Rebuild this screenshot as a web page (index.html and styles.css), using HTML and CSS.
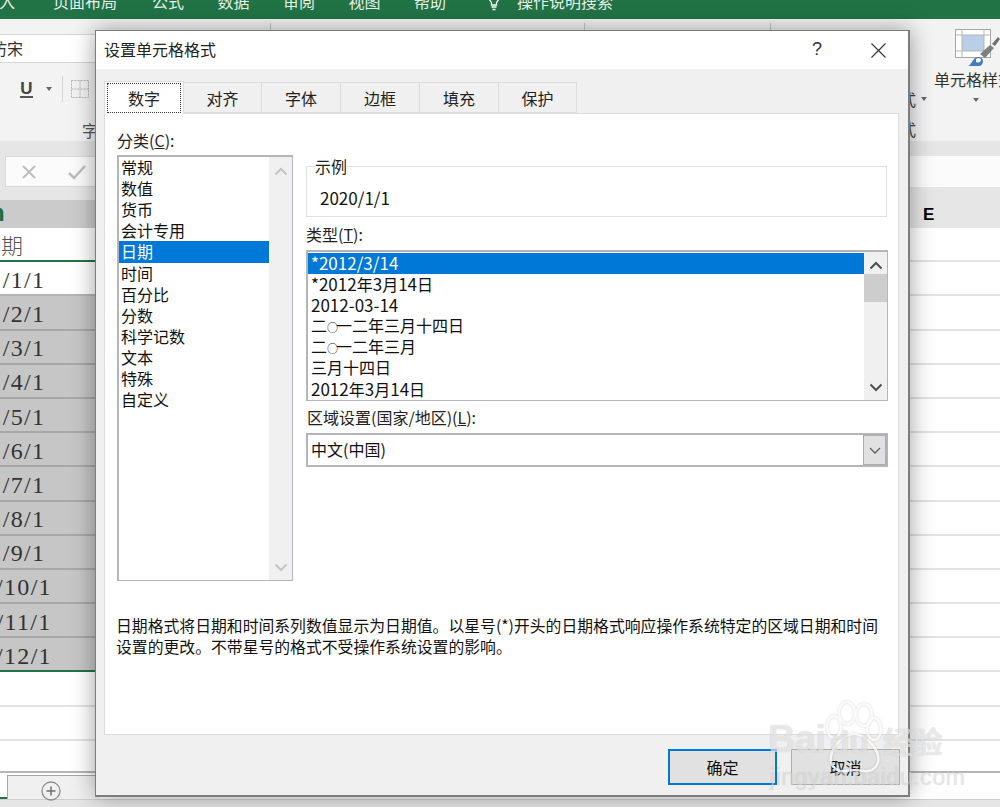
FILE: index.html
```html
<!DOCTYPE html>
<html lang="zh-CN">
<head>
<meta charset="utf-8">
<title>设置单元格格式</title>
<link rel="stylesheet" href="styles.css">
</head>
<body>
<div class="app">
  <div class="menubar">
    <span class="m m1">入</span><span class="m m2">页面布局</span><span class="m m2b">公式</span><span class="m m3">数据</span><span class="m m3">审阅</span><span class="m m3">视图</span><span class="m m3">帮助</span>
    <svg class="lamp" width="16" height="14" viewBox="0 0 16 14"><path d="M3 0c0 3 1.500 4 2.500 5.500V8h5V5.500C11.500 4 13 3 13 0M5.500 10h5M6.500 12.500h3" fill="none" stroke="#fff" stroke-width="1.300"/></svg>
    <span class="m m4">操作说明搜索</span>
  </div>

  <div class="ribbon">
    <div class="rb-left">
      <div class="fontbox"><span class="fontname">仿宋</span></div>
      <div class="tools">
        <span class="under">U</span>
        <span class="caret caret-u"></span>
        <span class="tooldiv"></span>
        <svg class="bordericon" width="18" height="18" viewBox="0 0 18 18"><path d="M.5.500h17v17H.5zM9 .500v17M.5 9h17" fill="none" stroke="#b5b5b5" stroke-dasharray="2 1"/></svg>
      </div>
      <div class="grouplabel">字</div>
    </div>
    <div class="rb-mid">
      <span class="rbdiv rbdiv1"></span><span class="rbdiv rbdiv2"></span><span class="rbdiv rbdiv3"></span>
    </div>
    <div class="rb-right">
      <div class="rb-col1">
        <div class="frag-row"><span class="frag">式</span><span class="caret"></span></div>
        <div class="frag frag2">式</div>
      </div>
      <div class="rb-col2">
        <svg class="styleicon" width="45" height="40" viewBox="0 0 45 40">
          <rect x=".5" y=".5" width="35" height="28" fill="#fff" stroke="#a6a6a6"/>
          <rect x="7" y="6" width="22" height="16" fill="#b9cfe8"/>
          <path d="M7 .5v28M29 .5v28M.5 6h35M.5 22h35" stroke="#b5b5b5" fill="none"/>
          <path d="M25 25l10-9 4 3-9 10z" fill="#7f7f7f"/>
          <path d="M37 15l6-7 2 2-5 7z" fill="#6f6f6f"/>
          <path d="M13 37c3-1 4-5 7-8 3-2 8-1 8 3 0 3-2 5-4 5z" fill="#3f7fc1"/>
          <path d="M21 30c2-2 5-1 5 1s-3 3-5 2z" fill="#fff"/>
        </svg>
        <div class="stylelabel">单元格样式</div>
        <span class="caret caret-s"></span>
      </div>
    </div>
  </div>

  <div class="formulabar">
    <div class="fxbox">
      <svg class="fxicon" width="16" height="16" viewBox="0 0 16 16"><path d="M2 2l12 12M14 2L2 14" stroke="#bdbdbd" stroke-width="2" fill="none"/></svg>
      <svg class="fxicon fxicon2" width="18" height="16" viewBox="0 0 18 16"><path d="M1 9l5 5L17 2" stroke="#bdbdbd" stroke-width="2.500" fill="none"/></svg>
    </div>
    <div class="fxright"></div>
  </div>

  <div class="headstrip"></div>
  <div class="colhead">
    <div class="colsel"><span class="colsel-t">n</span></div>
    <div class="colrest"><span class="coltext">E</span></div>
  </div>

  <div class="sheet">
    <div class="row"><div class="cell active-head"><span class="headtext">期</span></div></div>
    <div class="row"><div class="cell active"><span class="celltext">/1/1</span></div></div>
    <div class="row"><div class="cell sel"><span class="celltext">/2/1</span></div></div>
    <div class="row"><div class="cell sel"><span class="celltext">/3/1</span></div></div>
    <div class="row"><div class="cell sel"><span class="celltext">/4/1</span></div></div>
    <div class="row"><div class="cell sel"><span class="celltext">/5/1</span></div></div>
    <div class="row"><div class="cell sel"><span class="celltext">/6/1</span></div></div>
    <div class="row"><div class="cell sel"><span class="celltext">/7/1</span></div></div>
    <div class="row"><div class="cell sel"><span class="celltext">/8/1</span></div></div>
    <div class="row"><div class="cell sel"><span class="celltext">/9/1</span></div></div>
    <div class="row"><div class="cell sel"><span class="celltext">/10/1</span></div></div>
    <div class="row"><div class="cell sel"><span class="celltext">/11/1</span></div></div>
    <div class="row"><div class="cell sel last"><span class="celltext">/12/1</span></div></div>
    <div class="row"><div class="cell"></div></div>
    <div class="row"><div class="cell"></div></div>
    <div class="row row-short"><div class="cell"></div></div>
  </div>

  <div class="tabbar">
    <div class="sheetedge"></div>
    <div class="sheettabs">
      <svg class="plus" width="20" height="20" viewBox="0 0 20 20"><circle cx="10" cy="10" r="9" fill="none" stroke="#8c8c8c" stroke-width="1.300"/><path d="M10 5.500v9M5.500 10h9" stroke="#6f6f6f" stroke-width="1.500"/></svg>
    </div>
    <div class="tabright"></div>
  </div>
  <div class="statusbar"></div>
</div>

<div class="dialog">
  <div class="titlebar">
    <span class="title">设置单元格格式</span>
    <span class="help">?</span>
    <svg class="close" width="15" height="15" viewBox="0 0 15 15"><path d="M.5.500l14 14M14.500.500l-14 14" stroke="#333" stroke-width="1.100" fill="none"/></svg>
  </div>
  <div class="dbody">
    <div class="tabs">
      <div class="tab tab-on"><span class="focus">数字</span></div>
      <div class="tab tab2">对齐</div>
      <div class="tab tab3">字体</div>
      <div class="tab tab3">边框</div>
      <div class="tab tab3">填充</div>
      <div class="tab tab3">保护</div>
    </div>
    <div class="panel">
      <div class="cols">
        <div class="col1">
          <div class="label">分类(<u>C</u>):</div>
          <div class="listbox catlist">
            <div class="items">
              <div class="item">常规</div>
              <div class="item">数值</div>
              <div class="item">货币</div>
              <div class="item">会计专用</div>
              <div class="item item-on">日期</div>
              <div class="item">时间</div>
              <div class="item">百分比</div>
              <div class="item">分数</div>
              <div class="item">科学记数</div>
              <div class="item">文本</div>
              <div class="item">特殊</div>
              <div class="item">自定义</div>
            </div>
            <div class="scroll">
              <svg class="arrow" width="14" height="9" viewBox="0 0 14 9"><path d="M1.500 7.500L7 2l5.500 5.500" fill="none" stroke="#c4c4c4" stroke-width="2"/></svg>
              <svg class="arrow" width="14" height="9" viewBox="0 0 14 9"><path d="M1.500 1.500L7 7l5.500-5.500" fill="none" stroke="#c4c4c4" stroke-width="2"/></svg>
            </div>
          </div>
        </div>
        <div class="col2">
          <fieldset class="sample">
            <legend class="legend">示例</legend>
            <div class="samplevalue num">2020/1/1</div>
          </fieldset>
          <div class="label label-type">类型(<u>T</u>):</div>
          <div class="listbox typelist">
            <div class="items">
              <div class="item item-on"><span class="num">*2012/3/14</span></div>
              <div class="item"><span class="num">*2012</span>年<span class="num">3</span>月<span class="num">14</span>日</div>
              <div class="item"><span class="num">2012-03-14</span></div>
              <div class="item">二<span class="zero">○</span>一二年三月十四日</div>
              <div class="item">二<span class="zero">○</span>一二年三月</div>
              <div class="item">三月十四日</div>
              <div class="item"><span class="num">2012</span>年<span class="num">3</span>月<span class="num">14</span>日</div>
            </div>
            <div class="scroll">
              <svg class="arrow" width="14" height="9" viewBox="0 0 14 9"><path d="M1.500 7.500L7 2l5.500 5.500" fill="none" stroke="#505050" stroke-width="2"/></svg>
              <div class="thumb"></div>
              <svg class="arrow" width="14" height="9" viewBox="0 0 14 9"><path d="M1.500 1.500L7 7l5.500-5.500" fill="none" stroke="#505050" stroke-width="2"/></svg>
            </div>
          </div>
          <div class="label label-region">区域设置(国家/地区)(<u>L</u>):</div>
          <div class="select">
            <span class="selecttext">中文(中国)</span>
            <span class="selectbtn"><svg width="12" height="7" viewBox="0 0 12 7"><path d="M1 1l5 5 5-5" fill="none" stroke="#606060" stroke-width="1.300"/></svg></span>
          </div>
        </div>
      </div>
      <p class="desc">日期格式将日期和时间系列数值显示为日期值。以星号(*)开头的日期格式响应操作系统特定的区域日期和时间<br>设置的更改。不带星号的格式不受操作系统设置的影响。</p>
    </div>
    <div class="footer">
      <button class="btn btn-default">确定</button>
      <button class="btn">取消</button>
    </div>
  </div>
</div>

<div class="watermark">
  <svg class="paw" width="90" height="78" viewBox="0 0 90 78">
    <g fill="none" stroke="#fff" stroke-opacity=".8" stroke-width="2.500">
      <ellipse cx="18" cy="27" rx="7" ry="11"/>
      <ellipse cx="31" cy="13" rx="8" ry="11"/>
      <ellipse cx="48" cy="15" rx="8" ry="11"/>
      <ellipse cx="58" cy="29" rx="7" ry="11"/>
      <path d="M38 34c10 0 22 12 24 22 2 10-6 16-14 15-6-1-14-1-20 0-8 1-15-6-13-15 2-10 13-22 23-22z"/>
    </g>
  </svg>
  <span class="wm-bai">Bai</span>
  <span class="wm-du">du</span>
  <span class="wm-cn">经验</span>
  <span class="wm-url">jingyan.baidu.com</span>
</div>
</body>
</html>
```

FILE: styles.css
```css
* { box-sizing: border-box; }
html, body { margin: 0; padding: 0; }
body {
  width: 1000px;
  height: 807px;
  overflow: hidden;
  position: relative;
  background: #fff;
  font-family: "Noto Sans CJK SC", "Noto Sans", sans-serif;
  font-size: 16px;
  color: #111;
}
.app { width: 1000px; height: 807px; overflow: hidden; }

/* menu */
.menubar {
  height: 19px;
  background: #217346;
  display: flex;
  align-items: flex-end;
  overflow: hidden;
  color: #e6f0ea;
}
.m { font-size: 16px; line-height: 24px; margin-bottom: 6px; white-space: nowrap; flex: none; }
.m1 { margin-left: -1px; }
.m2 { margin-left: 38px; }
.m2b { margin-left: 35px; }
.m3 { margin-left: 33.500px; }
.lamp { margin-left: 40px; margin-bottom: 8px; flex: none; }
.m4 { margin-left: 15px; }

/* ribbon */
.ribbon {
  height: 122px;
  background: #f3f3f3;
  display: flex;
}
.rb-left { width: 100px; flex: none; }
.fontbox {
  margin-top: 15px;
  height: 29px;
  background: #fff;
  border-top: 1px solid #d4d4d4;
  border-bottom: 1px solid #d4d4d4;
  line-height: 27px;
  overflow: hidden;
  white-space: nowrap;
}
.fontname { display: block; margin-left: -9px; color: #333; }
.tools { margin-top: 16px; height: 20px; display: flex; align-items: center; }
.under {
  margin-left: 20px;
  font: bold 17px/17px "Liberation Sans", sans-serif;
  color: #444;
  border-bottom: 2px solid #555;
  height: 18px;
  width: 13px;
  text-align: center;
}
.caret {
  display: inline-block;
  width: 0; height: 0;
  border-left: 3.5px solid transparent;
  border-right: 3.5px solid transparent;
  border-top: 4px solid #666;
}
.caret-u { margin-left: 13px; }
.tooldiv { margin-left: 10px; width: 1px; height: 26px; background: #d4d4d4; }
.bordericon { margin-left: 8px; }
.grouplabel { margin-top: 20px; margin-left: 82px; line-height: 22px; color: #555; }

.rb-mid { flex: 1; display: flex; align-items: flex-start; }
.rbdiv { width: 1px; height: 8px; margin-top: 4px; background: #c6c6c6; flex: none; }
.rbdiv1 { margin-left: 170px; }
.rbdiv2 { margin-left: 313px; }
.rbdiv3 { margin-left: 185px; }

.rb-right { width: 100px; flex: none; display: flex; }
.rb-col1 { width: 34px; flex: none; padding-top: 69px; }
.frag-row { display: flex; align-items: center; gap: 5px; height: 22px; color: #444; }
.frag { color: #444; line-height: 22px; }
.frag2 { margin-top: 8px; }
.rb-col2 { flex: 1; overflow: hidden; padding-top: 10px; white-space: nowrap; }
.styleicon { display: block; margin-left: 21px; }
.stylelabel { margin-top: 0; line-height: 20px; color: #333; font-size: 16px; }
.caret-s { display: block; margin-left: 39px; margin-top: 9px; }

/* formula */
.formulabar {
  height: 46px;
  background: #e6e6e6;
  padding-top: 15px;
  display: flex;
}
.fxbox {
  margin-left: 5px;
  width: 95px;
  height: 31px;
  background: #fbfbfb;
  border: 1px solid #d8d8d8;
  display: flex;
  align-items: center;
  flex: none;
}
.fxicon { margin-left: 15px; }
.fxicon2 { margin-left: 31px; }
.fxright { flex: 1; background: #fbfbfb; }
.headstrip { height: 13px; background: #e6e6e6; }
.colhead { height: 28px; display: flex; }
.colsel { width: 100px; flex: none; background: #cbcbcb; overflow: hidden; }
.colsel-t { display: block; margin-left: -10px; font: bold 24px/26px "Liberation Sans", sans-serif; color: #1e6b42; }
.colrest { flex: 1; background: #e6e6e6; }
.coltext { display: block; margin-left: 823px; font: bold 17px/30px "Liberation Sans", sans-serif; color: #000; }

/* sheet */
.sheet { height: 547px; }
.row { height: 34.2px; border-bottom: 2px solid #e3e3e3; }
.row-short { height: 32px; border-bottom: 2px solid #b4b4b4; }
.cell { width: 100px; height: 100%; display: flex; align-items: center; justify-content: center; }
.cell.sel { background: #c6c6c6; box-shadow: 0 2px 0 #a8a8a8; }
.cell.last { box-shadow: 0 2px 0 #217346; }
.cell.active-head { box-shadow: 0 -1px 0 #217346, 0 2px 0 #217346; background: #fff; justify-content: flex-start; }
.cell.active { background: #fff; box-shadow: 0 2px 0 #b4b4b4; }
.headtext { margin-left: 1px; font: 22px/30px "Noto Sans CJK SC", sans-serif; font-weight: 300; color: #555; }
.celltext {
  width: 60px;
  margin-left: -6px;
  margin-right: 46px;
  padding-top: 3px;
  text-align: center;
  font: 24px/30px "Liberation Serif", serif;
  letter-spacing: 1.300px;
  color: #333;
}

/* bottom */
.tabbar { height: 24px; display: flex; }
.sheetedge { width: 7px; flex: none; background: #fff; border-bottom: 2px solid #217346; }
.sheettabs {
  width: 93px;
  flex: none;
  background: #f0f0f0;
  border-top: 1px solid #a6a6a6;
  border-left: 1px solid #a6a6a6;
}
.plus { display: block; margin: 5px 0 0 33px; }
.tabright { flex: 1; background: #fff; }
.statusbar { height: 10px; background: #e6e6e6; border-top: 1px solid #cfcfcf; }

/* dialog */
.dialog {
  position: absolute;
  left: 95px;
  top: 30px;
  width: 815px;
  height: 767px;
  background: #f0f0f0;
  border: 1px solid #7d7d7d;
  border-width: 1px 2px 2px 1px;
  box-shadow: 0 0 22px rgba(0, 0, 0, .38);
}
.titlebar {
  height: 38px;
  background: #fff;
  display: flex;
  align-items: center;
  padding-left: 8px;
  padding-bottom: 2px;
}
.title { color: #222; }
.help { margin-left: 596px; font: 18px "Liberation Sans", sans-serif; color: #333; }
.close { margin-left: 49px; margin-top: 2px; }
.dbody { padding: 12px 0 0 8px; }
.tabs { display: flex; height: 32px; align-items: flex-end; position: relative; z-index: 1; }
.tab {
  height: 31px;
  background: #f0f0f0;
  border: 1px solid #dcdcdc;
  border-left: 0;
  text-align: center;
  line-height: 30px;
  width: 79px;
  color: #222;
}
.tab2 { width: 78px; }
.tab3 { width: 79px; }
.tab3:last-child { width: 78px; }
.tab-on {
  width: 80px;
  height: 33px;
  margin-bottom: -1px;
  background: #fff;
  border: 1px solid #dcdcdc;
  border-bottom: 0;
  padding: 1px 2px 0;
}
.focus {
  display: block;
  height: 30px;
  border: 1px dotted #333;
  line-height: 28px;
}
.panel {
  width: 795px;
  height: 622px;
  background: #fff;
  border: 1px solid #dcdcdc;
  padding: 17px 0 0 12px;
}
.cols { display: flex; gap: 13px; }
.col1 { width: 176px; flex: none; }
.col2 { width: 582px; flex: none; }
.label { height: 21px; line-height: 18px; color: #222; white-space: nowrap; }
.listbox {
  border-style: solid;
  border-width: 2px 1px 1px 2px;
  border-color: #b4b4bb;
  display: flex;
  background: #fff;
}
.catlist { height: 426px; margin-top: 3px; }
.typelist { height: 151px; margin-top: 4px; }
.items { flex: 1; min-width: 0; }
.item { height: 21px; line-height: 19px; padding-left: 3px; white-space: nowrap; color: #111; }
.typelist .items { padding-top: 1px; }
.catlist .item { padding-left: 2px; line-height: 21px; }
.item-on { background: #0078d7; color: #fff; }
.catlist .item-on { height: 22px; }
.zero { font-size: 11px; letter-spacing: -2px; }
.scroll {
  width: 23px;
  flex: none;
  background: #f0f0f0;
  display: flex;
  flex-direction: column;
  align-items: center;
  justify-content: space-between;
  padding: 10px 0 8px;
}
.typelist .scroll { justify-content: flex-start; padding: 9px 0 8px; }
.thumb { width: 100%; height: 28px; margin: 4px 0 auto; background: #cdcdcd; }
.num { font-size: 17px; }
.sample {
  margin: 25px 0 0;
  padding: 0;
  height: 61px;
  width: 581px;
  border: 1px solid #e0e0e0;
  min-width: 0;
}
.legend { padding: 0; margin-left: 8px; line-height: 21px; color: #222; }
.samplevalue { padding-left: 13px; line-height: 21px; margin-top: 10px; color: #111; }
.label-type { margin-top: 8px; }
.label-region { margin-top: 7px; padding-left: 1px; }
.select {
  margin-top: 4px;
  height: 34px;
  border: 2px solid #b4b4bb;
  display: flex;
  align-items: center;
  justify-content: space-between;
  background: #fff;
}
.selecttext { padding-left: 3px; padding-bottom: 2px; color: #111; }
.selectbtn {
  width: 23px;
  height: 30px;
  background: #e1e1e1;
  border: 1px solid #adadad;
  display: flex;
  align-items: center;
  justify-content: center;
}
.desc { margin: 34px 0 0 -1px; font-size: 15.830px; line-height: 21px; white-space: nowrap; color: #111; }
.footer { display: flex; justify-content: flex-end; gap: 14px; padding: 14px 8px 0 0; }
.btn {
  width: 109px;
  height: 36px;
  background: #e1e1e1;
  border: 1px solid #adadad;
  font: inherit;
  color: #111;
  padding: 0;
}
.btn-default { border: 2px solid #0078d7; }

/* watermark */
.watermark {
  position: absolute;
  left: 768px;
  top: 695px;
  width: 190px;
  height: 100px;
  color: rgba(255, 255, 255, .6);
  text-shadow: 0 0 1px rgba(0, 0, 0, .22);
}
.paw { position: absolute; left: 48px; top: 5px; filter: drop-shadow(0 0 1px rgba(0, 0, 0, .2)); }
.wm-bai { position: absolute; left: 0; top: 22px; font: bold 38px/44px "Liberation Sans", sans-serif; letter-spacing: -.5px; }
.wm-du { position: absolute; left: 62px; top: 28px; font: bold 32px/38px "Liberation Sans", sans-serif; }
.wm-cn { position: absolute; left: 115px; top: 26px; font: bold 30px/38px "Noto Sans CJK SC", sans-serif; }
.wm-url { position: absolute; left: 2px; top: 68px; font: 23px/28px "Liberation Sans", sans-serif; letter-spacing: .6px; white-space: nowrap; color: rgba(255, 255, 255, .5); }
```
